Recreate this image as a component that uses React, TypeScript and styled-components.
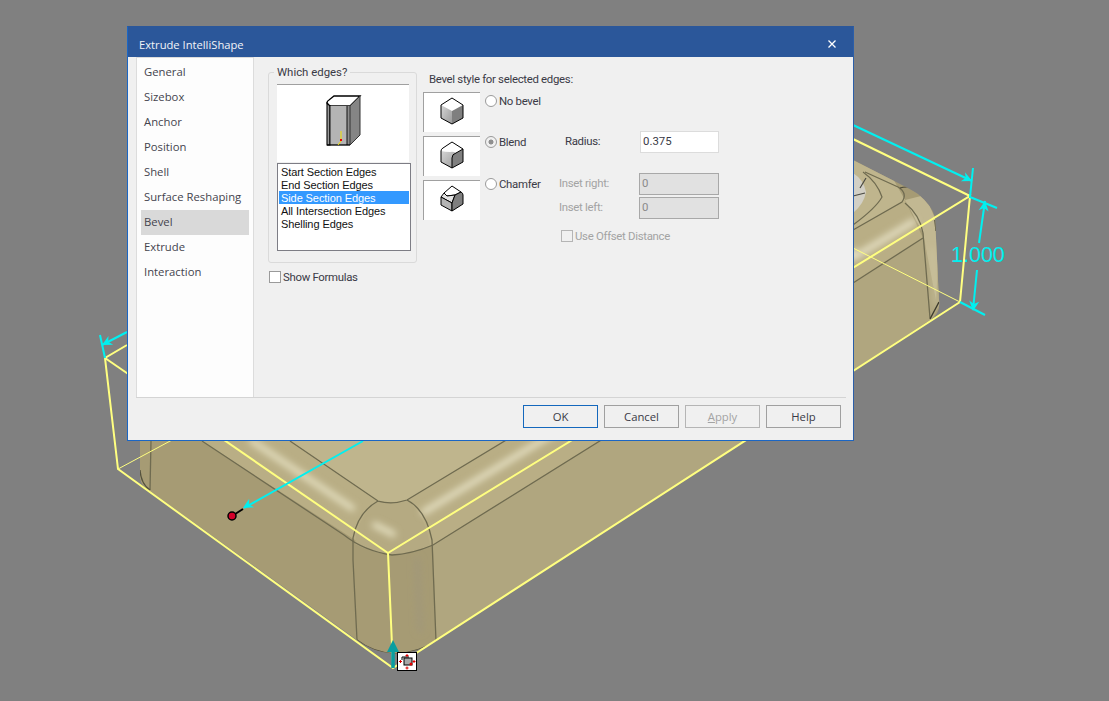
import React from 'react';
import styled, { createGlobalStyle } from 'styled-components';

const uiFont = '"Open Sans", "Noto Sans", sans-serif';
const panelFont = 'Roboto, "Open Sans", sans-serif';

const GlobalStyle = createGlobalStyle`
  html, body {
    margin: 0;
    height: 100%;
    overflow: hidden;
    background: #808080;
  }
`;

const Stage = styled.div`
  position: relative;
  width: 1109px;
  height: 701px;
  overflow: hidden;
  background: #808080;
`;

const Canvas = styled.svg`
  position: absolute;
  left: 0;
  top: 0;
`;

const Dialog = styled.div`
  position: absolute;
  left: 127px;
  top: 26px;
  width: 727px;
  height: 415px;
  box-sizing: border-box;
  border: 1px solid #1b66c4;
  border-top-color: #2b579a;
  border-right-color: #2b5ea8;
  background: #f0f0f0;
  font-family: ${uiFont};
  font-size: 11.3px;
  color: #3a3a46;
  display: flex;
  flex-direction: column;
`;

const TitleBar = styled.div`
  height: 30px;
  background: #2b579a;
  color: #f2f4f8;
  display: flex;
  align-items: center;
  justify-content: space-between;
  padding: 4px 17px 0 11px;
  box-sizing: border-box;
  font-size: 11.2px;
  flex: none;
`;

const CloseIcon = styled.svg`
  width: 8px;
  height: 8px;
  display: block;
`;

const Body = styled.div`
  display: flex;
  height: 340px;
  padding-left: 8px;
  flex: none;
`;

const Sidebar = styled.div`
  width: 118px;
  box-sizing: border-box;
  padding: 2px 4px 0 4px;
  background: #fdfdfd;
  border: 1px solid #dcdcdc;
  border-width: 1px 1px 0 1px;
  flex: none;
`;

const NavItem = styled.div<{ $active?: boolean }>`
  height: 25px;
  line-height: 24px;
  padding-left: 3px;
  background: ${(p) => (p.$active ? '#d9d9d9' : 'transparent')};
  color: #44444e;
  white-space: nowrap;
`;

const Content = styled.div`
  display: flex;
  padding: 15px 0 0 14px;
  align-items: flex-start;
  font-family: ${panelFont};
  font-size: 11.4px;
  letter-spacing: -0.3px;
`;

const LeftColumn = styled.div`
  width: 149px;
  flex: none;
`;

const GroupBox = styled.div`
  position: relative;
  box-sizing: border-box;
  height: 191px;
  padding: 11px 0 0 8px;
  border: 1px solid #dadada;
  border-radius: 3px;
`;

const GroupLegend = styled.div`
  position: absolute;
  top: -8px;
  left: 5px;
  padding: 0 3px;
  background: #f0f0f0;
  line-height: 15px;
  letter-spacing: 0;
  white-space: nowrap;
`;

const Preview = styled.div`
  width: 132px;
  height: 78px;
  box-sizing: border-box;
  background: #fff;
  border-top: 1px solid #a0a0a0;
`;

const EdgeList = styled.div`
  width: 134px;
  height: 88px;
  margin-top: 1px;
  box-sizing: border-box;
  background: #fff;
  border: 1px solid #7d7d85;
  padding: 1px;
  font-family: "Liberation Sans", Arial, sans-serif;
  font-size: 11px;
  letter-spacing: -0.09px;
  color: #111;
`;

const EdgeRow = styled.div<{ $selected?: boolean }>`
  height: 13px;
  line-height: 15px;
  padding-left: 2px;
  white-space: nowrap;
  background: ${(p) => (p.$selected ? '#3399ff' : 'transparent')};
  color: ${(p) => (p.$selected ? '#fff' : '#111')};
`;

const CheckRow = styled.label<{ $disabled?: boolean; $top: number; $left: number }>`
  display: flex;
  align-items: center;
  gap: 2px;
  height: 13px;
  margin-top: ${(p) => p.$top}px;
  margin-left: ${(p) => p.$left}px;
  color: ${(p) => (p.$disabled ? '#a3a3a3' : '#3a3a46')};
  white-space: nowrap;
`;

const CheckBox = styled.span<{ $disabled?: boolean }>`
  width: 12px;
  height: 12px;
  box-sizing: border-box;
  flex: none;
  background: ${(p) => (p.$disabled ? '#f0f0f0' : '#fff')};
  border: 1px solid ${(p) => (p.$disabled ? '#b5b5b5' : '#9a9a9a')};
`;

const RightColumn = styled.div`
  margin-left: 6px;
  width: 300px;
  flex: none;
`;

const Heading = styled.div`
  height: 14px;
  line-height: 15px;
  margin-bottom: 6px;
  padding-left: 6px;
  white-space: nowrap;
`;

const BevelColumns = styled.div`
  display: flex;
`;

const StyleColumn = styled.div`
  width: 136px;
  flex: none;
  display: flex;
  flex-direction: column;
  gap: 4px;
`;

const StyleRow = styled.div`
  display: flex;
  height: 40px;
`;

const Thumb = styled.div`
  width: 57px;
  height: 40px;
  flex: none;
  box-sizing: border-box;
  background: #fff;
  border-top: 1px solid #a0a0a0;
  border-left: 1px solid #a0a0a0;
`;

const RadioLabel = styled.label<{ $top: number }>`
  display: flex;
  align-items: center;
  gap: 2px;
  height: 13px;
  margin: ${(p) => p.$top}px 0 0 5px;
`;

const RadioDot = styled.span<{ $checked?: boolean }>`
  width: 12px;
  height: 12px;
  box-sizing: border-box;
  flex: none;
  border-radius: 50%;
  border: 1px solid #9a9a9a;
  background: ${(p) => (p.$checked ? 'radial-gradient(circle, #8f8f8f 0 2.2px, #f0f0f0 2.8px)' : '#fff')};
`;

const FieldColumn = styled.div`
  display: flex;
  flex-direction: column;
  width: 160px;
`;

const FieldRow = styled.div<{ $top: number; $inset?: number }>`
  display: flex;
  align-items: center;
  height: 22px;
  margin-top: ${(p) => p.$top}px;
  padding-left: ${(p) => p.$inset ?? 0}px;
`;

const FieldLabel = styled.span<{ $width: number; $disabled?: boolean }>`
  width: ${(p) => p.$width}px;
  flex: none;
  margin-top: -2px;
  color: ${(p) => (p.$disabled ? '#a3a3a3' : '#3a3a46')};
  white-space: nowrap;
`;

const FieldInput = styled.div<{ $disabled?: boolean }>`
  width: ${(p) => (p.$disabled ? 80 : 79)}px;
  height: 22px;
  box-sizing: border-box;
  line-height: 19px;
  padding-left: 2px;
  letter-spacing: 0;
  background: ${(p) => (p.$disabled ? '#e1e1e1' : '#fff')};
  border: 1px solid ${(p) => (p.$disabled ? '#a8a8a8' : '#dcdcdc')};
  color: ${(p) => (p.$disabled ? '#8a8a8a' : '#3a3a46')};
`;

const Footer = styled.div`
  margin: 0 7px 0 8px;
  padding: 7px 5px 0 0;
  border-top: 1px solid #d4d4d4;
  display: flex;
  justify-content: flex-end;
  gap: 6px;
`;

const ActionButton = styled.button<{ $primary?: boolean }>`
  width: 75px;
  height: 23px;
  padding: 0;
  box-sizing: border-box;
  font: inherit;
  color: ${(p) => (p.disabled ? '#a3a3a3' : '#3a3a46')};
  background: #f0f0f0;
  border: 1px solid ${(p) => (p.$primary ? '#1468bd' : p.disabled ? '#b5b5b5' : '#a0a0a0')};
  u { text-decoration: underline; }
`;

const navItems = ['General', 'Sizebox', 'Anchor', 'Position', 'Shell', 'Surface Reshaping', 'Bevel', 'Extrude', 'Interaction'];
const edgeItems = ['Start Section Edges', 'End Section Edges', 'Side Section Edges', 'All Intersection Edges', 'Shelling Edges'];

const modelOutline =
  'M140 300 L140 478 Q141 486 150 491 L357 640 Q372 652 395 654 Q420 652 436 641 L930 320 Q941 314 939 300 L935 217 Q932 206 918 194 Q912 190 900 184 L853 160 L600 100 L140 300 Z';

const Arrow = ({ x, y, angle, color, size = 10 }: { x: number; y: number; angle: number; color: string; size?: number }) => (
  <polygon
    points={`0,0 ${-size},${-size * 0.5} ${-size * 0.7},0 ${-size},${size * 0.5}`}
    fill={color}
    transform={`translate(${x} ${y}) rotate(${angle})`}
  />
);

// the CAD model behind the dialog
const ModelView = () => {
  const cyan = '#00f0f0';
  const yellow = '#ffff80';
  const seam = '#6f6b50';
  return (
    <Canvas width={1109} height={701} viewBox="0 0 1109 701">
      <defs>
        <filter id="soft" x="-20%" y="-20%" width="140%" height="140%">
          <feGaussianBlur stdDeviation="3.5" />
        </filter>
        <clipPath id="modelClip">
          <path d={modelOutline} />
        </clipPath>
      </defs>

      <path d={modelOutline} fill="#a69b74" />

      <g clipPath="url(#modelClip)">
        <path d="M436 641 L932 320 L940 304 L934 230 L923 238 L433 545 Z" fill="#b0a67f" />
        <path d="M290 441 L378 501 Q392 504 407 500 L853 230 L905 200 L860 120 L300 300 Z" fill="#bfb58d" />
        <path d="M202 441 L355 540 Q370 552 390 555 Q412 553 433 545 L853 283 L923 238 L905 200 L853 230 L407 500 Q392 504 378 501 L290 441 Z" fill="#b9ae85" />
        <path d="M355 544 Q358 515 378 501 Q392 504 407 500 Q425 515 430 545 Q412 553 390 555 Q370 552 355 544 Z" fill="#b5aa82" />
        <path d="M905 200 L923 233 L936 300 L940 230 L925 195 Z" fill="#c2b892" />
        <g filter="url(#soft)" fill="none" strokeLinecap="round">
          <path d="M252 441 L352 508" stroke="#e4dfc0" strokeWidth="6" />
          <path d="M375 525 Q385 530 393 534" stroke="#e4dfc0" strokeWidth="6" />
          <path d="M424 512 L853 252" stroke="#e6e1c4" strokeWidth="6" />
          <path d="M853 258 L913 222" stroke="#e8e3c8" strokeWidth="6" />
          <path d="M417 560 L420 630" stroke="#a0977a" strokeWidth="5" />
          <path d="M932 250 L936 305" stroke="#cfc8a4" strokeWidth="3" />
        </g>
        <path d="M853 173 Q864 180 866 192 Q864 204 853 213 Z" fill="#d2d0c6" />
        <path d="M853 196 L865 193 M860 188 L866 178" fill="none" stroke="#4a4a42" strokeWidth="1.2" />
        <path d="M863 172 Q877 182 882 197 Q876 208 853 225" fill="none" stroke={seam} strokeWidth="1.2" />
        <path d="M865 172 L898 187 Q908 193 902 202 L853 230" fill="none" stroke={seam} strokeWidth="1.3" />
        <path d="M900 188 Q906 186 913 188" fill="none" stroke="#4a4838" strokeWidth="1.1" />
        <path d="M853 283 L923 238" fill="none" stroke={seam} strokeWidth="1.3" />
        <path d="M905 203 Q920 215 923 233 L930 318" fill="none" stroke={seam} strokeWidth="1.3" />
        <path d="M290 441 L378 501 Q392 505 407 500 L853 230" fill="none" stroke={seam} strokeWidth="1.3" />
        <path d="M202 441 L344 535 Q364 551 392 555 Q412 554 433 545 L853 283" fill="none" stroke={seam} strokeWidth="1.3" />
        <path d="M378 501 Q358 512 353 538 L353 560 L357 640" fill="none" stroke={seam} strokeWidth="1.3" />
        <path d="M407 500 Q426 510 432 540 L436 641" fill="none" stroke={seam} strokeWidth="1.3" />
        <path d="M151 441 L150 490" fill="none" stroke={seam} strokeWidth="1.3" />
        <path d="M140 470 Q141 484 150 490" fill="none" stroke="#55523e" strokeWidth="1.3" />
        <path d="M357 640 Q372 652 395 654 Q420 652 436 641" fill="none" stroke="#55523e" strokeWidth="1.2" />
        <path d="M930 319 L939 302 M935 220 L936 231" fill="none" stroke="#3c3a2c" strokeWidth="1.4" />
      </g>

      <g fill="none" stroke={yellow} strokeWidth="2">
        <path d="M127 345 L105 358 L118 469 L393 668 L960 302 L970 196 L388 553 L393 668" />
        <path d="M105 358 L388 553" />
        <path d="M853 139 L970 196" />
        <path d="M118 469 L172 440" strokeWidth="1" />
        <path d="M853 248 L960 302" strokeWidth="1" />
      </g>

      <g fill="none" stroke={cyan} strokeWidth="2">
        <path d="M363 441 L244 508" />
        <path d="M853 125 L972 181" />
        <path d="M973 168 L970 197 L997 208" />
        <path d="M960 302 L985 315" />
        <path d="M985 201 L979 243" />
        <path d="M977 270 L973 310" />
        <path d="M100 335 L105 358" />
        <path d="M102 345 L127 332" />
      </g>
      <Arrow x={243} y={508} angle={150} color={cyan} />
      <Arrow x={972} y={181} angle={25} color={cyan} />
      <Arrow x={985} y={201} angle={-82} color={cyan} />
      <Arrow x={973} y={311} angle={97} color={cyan} />
      <Arrow x={102} y={345} angle={152} color={cyan} />
      <text x="951" y="262" fill={cyan} fontFamily='"Liberation Sans", Arial, sans-serif' fontSize="21.5">1.000</text>

      <path d="M232 516 L243 509" stroke="#000" strokeWidth="2" />
      <circle cx="232" cy="516" r="4" fill="#d4002a" stroke="#000" strokeWidth="1.5" />

      <path d="M393 668 L393 648" stroke="#0a9ea0" strokeWidth="3.5" />
      <polygon points="393,640 387,652 399,652" fill="#0a9ea0" />
      <g transform="translate(397 652)">
        <rect x="0.5" y="0.5" width="19" height="18" fill="#fff" stroke="#000" />
        <rect x="7" y="6" width="8" height="7" fill="#a8a8a8" stroke="#000" />
        <path d="M5 8 V5 H12" fill="none" stroke="#000" />
        <circle cx="14" cy="12" r="1.5" fill="#e00000" />
        <path d="M10 2 V5 M8.5 3.5 H11.5 M10 14.5 V17.5 M8.5 16 H11.5 M2 9.5 H5 M3.5 8 V11 M15.5 9.5 H18.5 M17 8 V11" stroke="#e00000" />
      </g>
    </Canvas>
  );
};

const ColumnPicture = () => (
  <svg width={132} height={77} viewBox="0 0 132 77">
    <path d="M50 18 Q50 16 52 15 L57 11 H83 L73 21 H54 Q51 21 50 18 Z" fill="#fff" stroke="#000" strokeWidth="1.3" />
    <path d="M50 18 L53 21 V60 H50 Z" fill="#9a9a9a" stroke="#000" strokeWidth="1.1" />
    <rect x="53" y="21" width="17" height="39" fill="#b4b4b4" />
    <rect x="70" y="21" width="3" height="39" fill="#8d8d8d" />
    <path d="M73 21 L83 11 V50 L73 60 Z" fill="#858585" stroke="#333" strokeWidth="1" />
    <path d="M50 60 H73" stroke="#000" strokeWidth="1.3" />
    <path d="M53 21 V60 M70 21 V60" stroke="#000" strokeWidth="0.9" />
    <path d="M64 46 V56 L61 60" fill="none" stroke="#f0e000" strokeWidth="1" />
    <rect x="63" y="54" width="2" height="2" fill="#f00000" />
  </svg>
);

const BevelPicture = ({ kind }: { kind: 'none' | 'blend' | 'chamfer' }) => (
  <svg width={56} height={39} viewBox="1 1 56 39">
    <defs>
      <linearGradient id={`lit-${kind}`} x1="0" y1="0" x2="1" y2="1">
        <stop offset="0" stopColor="#d6d6d6" />
        <stop offset="1" stopColor="#9a9a9a" />
      </linearGradient>
    </defs>
    {kind === 'none' && (
      <g stroke="#000" strokeWidth="1" strokeLinejoin="round">
        <path d="M29 6 L40 13 L29 19 L18 13 Z" fill="#fff" stroke="none" />
        <path d="M18 13 L29 19 V32 L18 26 Z" fill={`url(#lit-${kind})`} stroke="none" />
        <path d="M40 13 L29 19 V32 L40 26 Z" fill="#7f7f7f" stroke="none" />
        <path d="M29 6 L40 13 V26 L29 32 L18 26 V13 Z" fill="none" />
      </g>
    )}
    {kind === 'blend' && (
      <g stroke="#000" strokeWidth="1" strokeLinejoin="round">
        <path d="M18 15 Q18 13 20 12 L29 6 L40 13 L33 17 Q30 15 27 16 Q22 16 18 15 Z" fill="#fff" stroke="none" />
        <path d="M18 15 Q22 16 27 16 Q30 15 33 17 Q29 18 29 22 V32 L18 26 Z" fill={`url(#lit-${kind})`} stroke="none" />
        <path d="M40 13 V26 L29 32 V22 Q29 18 33 17 Z" fill="#7f7f7f" stroke="none" />
        <path d="M18 15 Q18 13 20 12 L29 6 L40 13 V26 L29 32 L18 26 Z M29 32 V22 Q29 18 33 17 L40 13" fill="none" />
      </g>
    )}
    {kind === 'chamfer' && (
      <g stroke="#000" strokeWidth="1" strokeLinejoin="round">
        <path d="M29 6 L38 12 L32 15 L24 16 L21 13 Z" fill="#fff" />
        <path d="M21 13 L24 16 L32 15 L29 23 L18 17 Z" fill="#e4e4e4" />
        <path d="M18 17 L29 23 V31 L18 25 Z" fill="#b4b4b4" />
        <path d="M38 12 Q40 13 40 15 V24 L29 31 V23 L32 15 Z" fill="#7f7f7f" />
      </g>
    )}
  </svg>
);

export default function App() {
  return (
    <Stage>
      <GlobalStyle />
      <ModelView />
      <Dialog>
        <TitleBar>
          <span>Extrude IntelliShape</span>
          <CloseIcon viewBox="0 0 8 8">
            <path d="M0.5 0.5 L7.5 7.5 M7.5 0.5 L0.5 7.5" stroke="#fff" strokeWidth="1.3" />
          </CloseIcon>
        </TitleBar>
        <Body>
          <Sidebar>
            {navItems.map((item) => (
              <NavItem key={item} $active={item === 'Bevel'}>{item}</NavItem>
            ))}
          </Sidebar>
          <Content>
            <LeftColumn>
              <GroupBox>
                <GroupLegend>Which edges?</GroupLegend>
                <Preview>
                  <ColumnPicture />
                </Preview>
                <EdgeList>
                  {edgeItems.map((item) => (
                    <EdgeRow key={item} $selected={item === 'Side Section Edges'}>{item}</EdgeRow>
                  ))}
                </EdgeList>
              </GroupBox>
              <CheckRow $top={7} $left={1}>
                <CheckBox />
                Show Formulas
              </CheckRow>
            </LeftColumn>
            <RightColumn>
              <Heading>Bevel style for selected edges:</Heading>
              <BevelColumns>
                <StyleColumn>
                  <StyleRow>
                    <Thumb><BevelPicture kind="none" /></Thumb>
                    <RadioLabel $top={2}><RadioDot />No bevel</RadioLabel>
                  </StyleRow>
                  <StyleRow>
                    <Thumb><BevelPicture kind="blend" /></Thumb>
                    <RadioLabel $top={-1}><RadioDot $checked />Blend</RadioLabel>
                  </StyleRow>
                  <StyleRow>
                    <Thumb><BevelPicture kind="chamfer" /></Thumb>
                    <RadioLabel $top={-3}><RadioDot />Chamfer</RadioLabel>
                  </StyleRow>
                </StyleColumn>
                <FieldColumn>
                  <FieldRow $top={39} $inset={6}>
                    <FieldLabel $width={75}>Radius:</FieldLabel>
                    <FieldInput>0.375</FieldInput>
                  </FieldRow>
                  <FieldRow $top={20}>
                    <FieldLabel $width={80} $disabled>Inset right:</FieldLabel>
                    <FieldInput $disabled>0</FieldInput>
                  </FieldRow>
                  <FieldRow $top={2}>
                    <FieldLabel $width={80} $disabled>Inset left:</FieldLabel>
                    <FieldInput $disabled>0</FieldInput>
                  </FieldRow>
                  <CheckRow $disabled $top={10} $left={2}>
                    <CheckBox $disabled />
                    Use Offset Distance
                  </CheckRow>
                </FieldColumn>
              </BevelColumns>
            </RightColumn>
          </Content>
        </Body>
        <Footer>
          <ActionButton $primary>OK</ActionButton>
          <ActionButton>Cancel</ActionButton>
          <ActionButton disabled><u>A</u>pply</ActionButton>
          <ActionButton>Help</ActionButton>
        </Footer>
      </Dialog>
    </Stage>
  );
}
